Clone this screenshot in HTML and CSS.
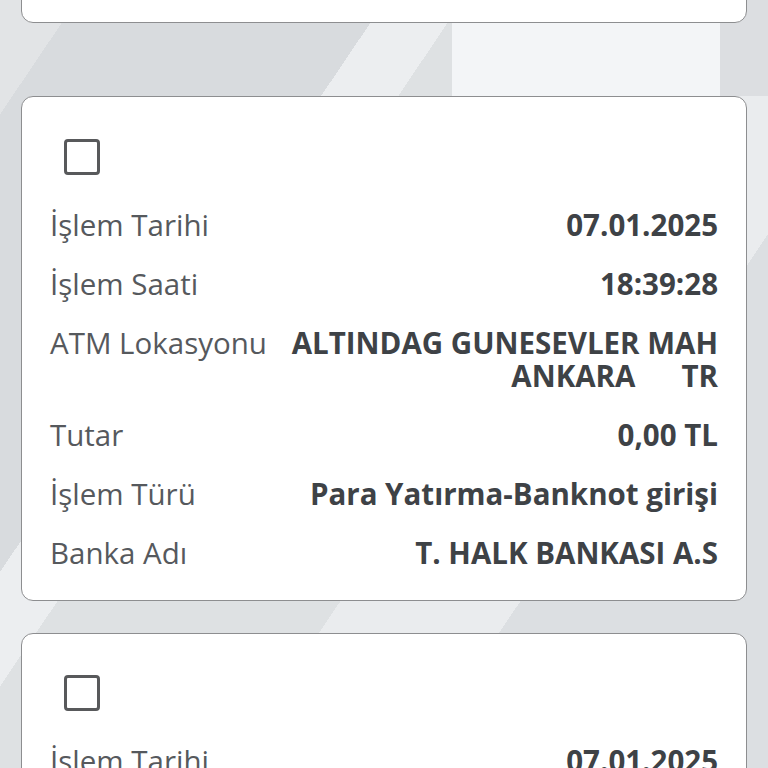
FILE: index.html
```html
<!DOCTYPE html>
<html lang="tr">
<head>
<meta charset="utf-8">
<title>İşlemler</title>
<link rel="stylesheet" href="styles.css">
</head>
<body>
<div class="list">
  <div class="card card-prev"></div>

  <div class="card">
    <div class="check"></div>
    <div class="rows">
      <div class="row"><span class="label">İşlem Tarihi</span><span class="value">07.01.2025</span></div>
      <div class="row"><span class="label">İşlem Saati</span><span class="value">18:39:28</span></div>
      <div class="row"><span class="label">ATM Lokasyonu</span><span class="value">ALTINDAG GUNESEVLER MAH<br>ANKARA      TR</span></div>
      <div class="row"><span class="label">Tutar</span><span class="value">0,00 TL</span></div>
      <div class="row"><span class="label">İşlem Türü</span><span class="value">Para Yatırma-Banknot girişi</span></div>
      <div class="row"><span class="label">Banka Adı</span><span class="value">T. HALK BANKASI A.S</span></div>
    </div>
  </div>

  <div class="card">
    <div class="check"></div>
    <div class="rows">
      <div class="row"><span class="label">İşlem Tarihi</span><span class="value">07.01.2025</span></div>
      <div class="row"><span class="label">İşlem Saati</span><span class="value">18:39:28</span></div>
    </div>
  </div>
</div>
</body>
</html>
```
FILE: styles.css
```css
html, body {
  margin: 0;
  padding: 0;
}
body {
  width: 768px;
  height: 768px;
  overflow: hidden;
  font-family: "Open Sans", "Noto Sans", sans-serif;
  background-color: #e2e4e7;
  background-image:
    linear-gradient(90deg, transparent 0 452px, #f3f5f7 452px 720px, #dcdee1 720px 768px),
    linear-gradient(124deg, #e2e4e6 0 6%, #d8dbde 6% 30%, #eceef0 30% 36%, #dee1e3 36% 58%, #eaecee 58% 72%, #dcdfe2 72% 100%);
  background-repeat: no-repeat;
  background-size: 768px 96px, 768px 768px;
}
.list {
  display: flex;
  flex-direction: column;
  gap: 32px;
  padding: 0 21px;
  margin-top: -480px;
}
.card {
  background: #fff;
  border: 1.5px solid #8d8e90;
  border-radius: 12px;
  padding: 41.5px 28px 31px 28px;
  box-sizing: border-box;
}
.card-prev {
  height: 503px;
  margin-bottom: 41px;
}
.check {
  width: 36px;
  height: 36px;
  box-sizing: border-box;
  border: 3.5px solid #58595b;
  border-radius: 4px;
  margin-left: 14px;
  margin-bottom: 33px;
}
.rows {
  display: flex;
  flex-direction: column;
  gap: 26px;
}
.row {
  display: flex;
  justify-content: space-between;
  align-items: flex-start;
  gap: 18px;
  font-size: 29.5px;
  line-height: 33px;
}
.label {
  color: #56595d;
  white-space: nowrap;
}
.value {
  color: #3e4246;
  font-weight: 700;
  text-align: right;
  white-space: pre;
}
```
